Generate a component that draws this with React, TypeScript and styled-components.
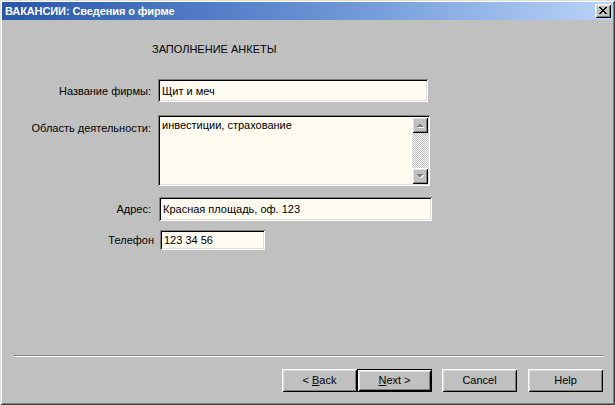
import React from "react";
import styled, { createGlobalStyle } from "styled-components";

const GlobalStyle = createGlobalStyle`
    html, body {
        margin: 0;
        padding: 0;
        background: #c0c0c0;
    }
    body {
        font-family: "Liberation Sans", Arial, sans-serif;
        font-size: 11px;
        color: #000;
    }
`;

const Window = styled.div`
    width: 615px;
    height: 405px;
    box-sizing: border-box;
    padding: 2px;
    background: #c0c0c0;
    display: flex;
    flex-direction: column;
    box-shadow: inset 1px 1px 0 #dfdfdf, inset -1px -1px 0 #404040, inset 2px 2px 0 #ffffff,
        inset -2px -2px 0 #808080;
`;

const TitleBar = styled.div`
    height: 18px;
    display: flex;
    align-items: center;
    padding: 0 2px 0 3px;
    background: linear-gradient(to right, #2856ab, #6c95d6 55%, #b9d4f8);
    flex-shrink: 0;
`;

const Title = styled.div`
    flex: 1;
    color: #fff;
    font-weight: bold;
    font-size: 11px;
    letter-spacing: -0.1px;
    white-space: nowrap;
`;

const raised = `
    background: #c0c0c0;
    box-shadow: inset 1px 1px 0 #ffffff, inset -1px -1px 0 #000000, inset 2px 2px 0 #dfdfdf,
        inset -2px -2px 0 #808080;
`;

const CloseButton = styled.div`
    width: 16px;
    height: 14px;
    ${raised}
    display: flex;
    align-items: center;
    justify-content: center;
    padding: 0 0 1px 0;
    box-sizing: border-box;
`;

const Body = styled.div`
    flex: 1;
    padding-top: 23px;
`;

const Heading = styled.div`
    padding-left: 150px;
    line-height: 13px;
    margin-bottom: 23px;
`;

const Row = styled.div<{ $mt?: number; $top?: boolean }>`
    display: flex;
    align-items: ${(p) => (p.$top ? "flex-start" : "center")};
    margin-top: ${(p) => p.$mt ?? 0}px;
`;

const Label = styled.div<{ $top?: boolean; $w?: number }>`
    width: ${(p) => p.$w ?? 149}px;
    text-align: right;
    white-space: nowrap;
    padding-top: ${(p) => (p.$top ? 7 : 0)}px;
`;

const Field = styled.div<{ $w: number; $h: number; $ml: number }>`
    width: ${(p) => p.$w}px;
    height: ${(p) => p.$h}px;
    margin-left: ${(p) => p.$ml}px;
    box-sizing: border-box;
    padding: 2px;
    background: #fffbf0;
    box-shadow: inset 1px 1px 0 #808080, inset -1px -1px 0 #ffffff, inset 2px 2px 0 #000000,
        inset -2px -2px 0 #dfdfdf;
    display: flex;
`;

const FieldText = styled.div<{ $top?: boolean }>`
    flex: 1;
    padding-left: 2px;
    display: flex;
    align-items: ${(p) => (p.$top ? "flex-start" : "center")};
    padding-top: ${(p) => (p.$top ? 2 : 0)}px;
    white-space: nowrap;
`;

const ScrollBar = styled.div`
    width: 16px;
    display: flex;
    flex-direction: column;
`;

const ScrollButton = styled.div`
    width: 16px;
    height: 16px;
    box-sizing: border-box;
    ${raised}
    display: flex;
    align-items: center;
    justify-content: center;
`;

const ScrollTrack = styled.div`
    flex: 1;
    background: repeating-conic-gradient(#c0c0c0 0 25%, #ffffff 0 50%) 0 0 / 2px 2px;
`;

const Footer = styled.div`
    padding: 0 10px 11px 12px;
`;

const Separator = styled.div`
    height: 1px;
    background: #808080;
    border-bottom: 1px solid #ffffff;
    margin-bottom: 12px;
`;

const ButtonRow = styled.div`
    display: flex;
    justify-content: flex-end;
`;

const Button = styled.div<{ $ml?: number; $default?: boolean }>`
    width: 75px;
    height: 23px;
    box-sizing: border-box;
    margin-left: ${(p) => p.$ml ?? 0}px;
    display: flex;
    align-items: center;
    justify-content: center;
    padding-bottom: 1px;
    background: #c0c0c0;
    box-shadow: ${(p) =>
        p.$default
            ? "inset 0 0 0 1px #000, inset 2px 2px 0 #ffffff, inset -2px -2px 0 #000000, inset 3px 3px 0 #dfdfdf, inset -3px -3px 0 #808080"
            : "inset 1px 1px 0 #ffffff, inset -1px -1px 0 #000000, inset 2px 2px 0 #dfdfdf, inset -2px -2px 0 #808080"};
`;

const CloseGlyph = () => {
    const rows = ["11000011", "01100110", "00111100", "00011000", "00111100", "01100110", "11000011"];
    return (
        <svg width="8" height="7" viewBox="0 0 8 7" shapeRendering="crispEdges">
            {rows.flatMap((r, y) =>
                r.split("").map((c, x) => (c === "1" ? <rect key={`${x}-${y}`} x={x} y={y} width="1" height="1" fill="#000" /> : null))
            )}
        </svg>
    );
};

const Arrow = ({ up }: { up: boolean }) => (
    <svg width="8" height="5" viewBox="0 0 8 5" shapeRendering="crispEdges">
        {up ? (
            <>
                <polygon points="1,5 8,5 4.5,1.5" fill="#ffffff" />
                <polygon points="0,4 7,4 3.5,0.5" fill="#808080" />
            </>
        ) : (
            <>
                <polygon points="1,1 8,1 4.5,4.5" fill="#ffffff" />
                <polygon points="0,0 7,0 3.5,3.5" fill="#808080" />
            </>
        )}
    </svg>
);

export default function App() {
    return (
        <>
            <GlobalStyle />
            <Window>
                <TitleBar>
                    <Title>ВАКАНСИИ: Сведения о фирме</Title>
                    <CloseButton>
                        <CloseGlyph />
                    </CloseButton>
                </TitleBar>
                <Body>
                    <Heading>ЗАПОЛНЕНИЕ АНКЕТЫ</Heading>
                    <Row>
                        <Label>Название фирмы:</Label>
                        <Field $w={270} $h={23} $ml={7}>
                            <FieldText>Щит и меч</FieldText>
                        </Field>
                    </Row>
                    <Row $mt={13} $top>
                        <Label $top>Область деятельности:</Label>
                        <Field $w={272} $h={71} $ml={7}>
                            <FieldText $top>инвестиции, страхование</FieldText>
                            <ScrollBar>
                                <ScrollButton>
                                    <Arrow up />
                                </ScrollButton>
                                <ScrollTrack />
                                <ScrollButton>
                                    <Arrow up={false} />
                                </ScrollButton>
                            </ScrollBar>
                        </Field>
                    </Row>
                    <Row $mt={11}>
                        <Label>Адрес:</Label>
                        <Field $w={273} $h={24} $ml={8}>
                            <FieldText>Красная площадь, оф. 123</FieldText>
                        </Field>
                    </Row>
                    <Row $mt={9}>
                        <Label $w={152}>Телефон</Label>
                        <Field $w={105} $h={20} $ml={6}>
                            <FieldText>123 34 56</FieldText>
                        </Field>
                    </Row>
                </Body>
                <Footer>
                    <Separator />
                    <ButtonRow>
                        <Button>
                            &lt;&nbsp;<u>B</u>ack
                        </Button>
                        <Button $default>
                            <u>N</u>ext&nbsp;&gt;
                        </Button>
                        <Button $ml={10}>Cancel</Button>
                        <Button $ml={11}>Help</Button>
                    </ButtonRow>
                </Footer>
            </Window>
        </>
    );
}
